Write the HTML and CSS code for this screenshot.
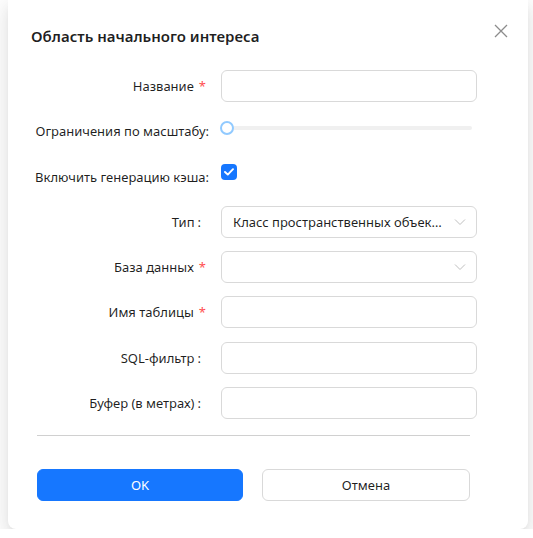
FILE: index.html
```html
<!DOCTYPE html>
<html lang="ru">
<head>
<meta charset="utf-8">
<title>Область начального интереса</title>
<link rel="stylesheet" href="styles.css">
</head>
<body>
<div class="modal">
  <div class="header">
    <div class="title">Область начального интереса</div>
    <button class="close" aria-label="Закрыть">
      <svg width="14" height="14" viewBox="0 0 14 14"><path d="M1 1L13 13M13 1L1 13" stroke="#8c8c8c" stroke-width="1.3" fill="none"/></svg>
    </button>
  </div>
  <div class="form">
    <div class="label req-l">Название<span class="req">*</span></div>
    <div class="input"></div>

    <div class="label long">Ограничения по масштабу:</div>
    <div class="slider"><div class="rail"></div><div class="handle"></div></div>

    <div class="label long">Включить генерацию кэша:</div>
    <div class="check-cell"><span class="checkbox"><svg width="10" height="8" viewBox="0 0 10 8"><path d="M1 4L3.8 6.6L9 1.2" stroke="#fff" stroke-width="1.9" fill="none" stroke-linecap="round" stroke-linejoin="round"/></svg></span></div>

    <div class="label colon-l">Тип<span class="colon">:</span></div>
    <div class="input select"><span class="value">Класс пространственных объектов</span><svg class="chev" width="12" height="8" viewBox="0 0 12 8"><path d="M1 1.5L6 6.5L11 1.5" stroke="#bfbfbf" stroke-width="1" fill="none"/></svg></div>

    <div class="label req-l">База данных<span class="req">*</span></div>
    <div class="input select"><span class="value"></span><svg class="chev" width="12" height="8" viewBox="0 0 12 8"><path d="M1 1.5L6 6.5L11 1.5" stroke="#bfbfbf" stroke-width="1" fill="none"/></svg></div>

    <div class="label req-l">Имя таблицы<span class="req">*</span></div>
    <div class="input"></div>

    <div class="label colon-l">SQL-фильтр<span class="colon">:</span></div>
    <div class="input"></div>

    <div class="label colon-l">Буфер (в метрах)<span class="colon">:</span></div>
    <div class="input"></div>
  </div>
  <div class="divider"></div>
  <div class="footer">
    <button class="btn primary">OK</button>
    <button class="btn">Отмена</button>
  </div>
</div>
</body>
</html>
```
FILE: styles.css
```css
html, body {
  margin: 0;
  padding: 0;
  background: #ffffff;
}
body {
  font-family: "Noto Sans", "Open Sans", sans-serif;
  color: rgba(0,0,0,0.88);
  padding: 0 5px 0 8px;
}
.modal {
  width: 520px;
  background: #fff;
  border-radius: 0 0 8px 8px;
  box-shadow: 0 6px 16px 0 rgba(0,0,0,0.08), 0 3px 6px -4px rgba(0,0,0,0.12), 0 9px 28px 8px rgba(0,0,0,0.05);
  padding: 24px 0 29px 29px;
  box-sizing: border-box;
  height: 529px;
}
.header {
  display: flex;
  justify-content: space-between;
  align-items: flex-start;
  margin-left: -6px;
  padding-right: 20px;
}
.title {
  font-size: 15px;
  font-weight: 600;
  line-height: 24px;
}
.close {
  border: 0;
  background: none;
  padding: 0;
  margin-top: 0;
  width: 14px;
  height: 14px;
  display: block;
}
.close svg { display: block; }
.form {
  margin-top: 22px;
  display: grid;
  grid-template-columns: 176px 256px;
  grid-auto-rows: 32px;
  column-gap: 8px;
  row-gap: 13.3px;
}
.label {
  display: flex;
  justify-content: flex-end;
  align-items: center;
  white-space: nowrap;
  font-size: 13px;
  line-height: 32px;
}
.req-l { padding-right: 7px; }
.colon-l { padding-right: 12px; }
.long { padding-right: 4px; }
.req {
  color: #ff4d4f;
  margin-left: 5px;
  font-size: 13px;
}
.colon { margin-left: 3px; }
.input {
  border: 1px solid #d9d9d9;
  border-radius: 6px;
  box-sizing: border-box;
  height: 32px;
}
.select {
  display: flex;
  align-items: center;
  padding: 0 10px 0 11px;
  gap: 8px;
}
.value {
  flex: 1;
  min-width: 0;
  font-size: 13px;
  white-space: nowrap;
  overflow: hidden;
  text-overflow: ellipsis;
}
.chev { flex: none; }
.slider {
  position: relative;
  height: 32px;
}
.rail {
  position: absolute;
  left: 5px;
  right: 5px;
  top: 11px;
  height: 4px;
  border-radius: 2px;
  background: #f0f0f0;
}
.handle {
  position: absolute;
  left: -1px;
  top: 6px;
  width: 10px;
  height: 10px;
  border-radius: 50%;
  background: #fff;
  border: 2px solid #91caff;
}
.check-cell { padding-top: 3px; }
.checkbox {
  display: flex;
  align-items: center;
  justify-content: center;
  width: 16px;
  height: 16px;
  border-radius: 4px;
  background: #1677ff;
}
.divider {
  margin-top: 16px;
  width: 433px;
  height: 1px;
  background: #d0d0d0;
}
.footer {
  margin-top: 33px;
  width: 433px;
  display: grid;
  grid-template-columns: 206px 208px;
  column-gap: 19px;
}
.btn {
  height: 32px;
  border-radius: 6px;
  border: 1px solid #d9d9d9;
  background: #fff;
  font-family: "Noto Sans", "Open Sans", sans-serif;
  font-size: 13px;
  color: rgba(0,0,0,0.88);
  padding: 0;
}
.btn.primary {
  background: #1677ff;
  border-color: #1677ff;
  color: #fff;
}
```
